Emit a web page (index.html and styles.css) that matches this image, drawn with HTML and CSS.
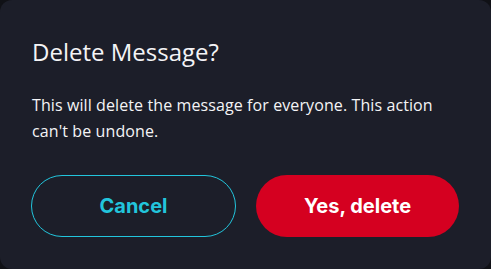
FILE: index.html
```html
<!DOCTYPE html>
<html>
<head>
<meta name="viewport" content="width=device-width, initial-scale=1">
<link rel="stylesheet" href="styles.css">
</head>
<body>

<div class="dialog">
  <h2 class="dialog-title">Delete Message?</h2>
  <p class="dialog-text">This will delete the message for everyone. This action can't be undone.</p>
  <div class="dialog-actions">
    <button class="btn btn-cancel">Cancel</button>
    <button class="btn btn-delete">Yes, delete</button>
  </div>
</div>

</body>
</html>
```

FILE: styles.css
```css
* {box-sizing: border-box}

body, html {
  height: 100%;
  margin: 0;
  background-color: #101116;
}

/* the dialog box fills the window */
.dialog {
  height: 100%;
  background-color: #1c1e29;
  border-radius: 12px;
  padding: 36px 32px 0 31px;
  font-family: "Open Sans", sans-serif;
  color: #f4f4f6;
}

.dialog-title {
  margin: 0 0 0 1px;
  font-size: 24px;
  font-weight: 400;
  line-height: 32px;
}

.dialog-text {
  margin: 24px 0 0 1px;
  font-size: 16px;
  line-height: 26px;
  letter-spacing: 0.1px;
}

.dialog-actions {
  display: flex;
  gap: 20px;
  margin-top: 31px;
}

.btn {
  flex: 1;
  height: 62px;
  border-radius: 31px;
  font-family: Inter, sans-serif;
  font-size: 20px;
  font-weight: 700;
  cursor: pointer;
}

.btn-cancel {
  background: none;
  border: 1.5px solid #22c5dc;
  color: #22c5dc;
}

.btn-delete {
  background-color: #d50020;
  border: none;
  color: #ffffff;
}
```
